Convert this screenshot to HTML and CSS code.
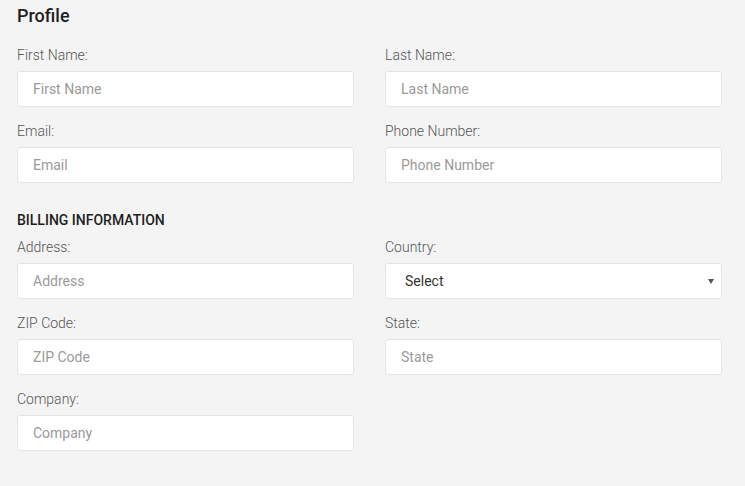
FILE: index.html
```html
<!DOCTYPE html>
<html>
<head>
<meta charset="utf-8">
<link rel="stylesheet" href="styles.css">
</head>
<body>
<div class="page">
  <h1 class="title">Profile</h1>
  <div class="grid">
    <div class="field">
      <label class="label">First Name:</label>
      <input class="input" type="text" placeholder="First Name">
    </div>
    <div class="field">
      <label class="label">Last Name:</label>
      <input class="input" type="text" placeholder="Last Name">
    </div>
    <div class="field">
      <label class="label">Email:</label>
      <input class="input" type="text" placeholder="Email">
    </div>
    <div class="field">
      <label class="label">Phone Number:</label>
      <input class="input" type="text" placeholder="Phone Number">
    </div>
  </div>
  <h2 class="section">BILLING INFORMATION</h2>
  <div class="grid">
    <div class="field">
      <label class="label">Address:</label>
      <input class="input" type="text" placeholder="Address">
    </div>
    <div class="field">
      <label class="label">Country:</label>
      <div class="select-wrap">
        <select class="select">
          <option>Select</option>
        </select>
      </div>
    </div>
    <div class="field">
      <label class="label">ZIP Code:</label>
      <input class="input" type="text" placeholder="ZIP Code">
    </div>
    <div class="field">
      <label class="label">State:</label>
      <input class="input" type="text" placeholder="State">
    </div>
    <div class="field">
      <label class="label">Company:</label>
      <input class="input" type="text" placeholder="Company">
    </div>
  </div>
</div>
</body>
</html>
```

FILE: styles.css
```css
* { box-sizing: border-box; }
html, body {
  margin: 0;
  background: #f4f4f4;
  font-family: Roboto, "Liberation Sans", Arial, sans-serif;
}
.page {
  padding: 5px 0 0 17px;
  width: 722px;
}
.title {
  margin: 0 0 19px;
  font-size: 18px;
  line-height: 22px;
  font-weight: 500;
  color: #1e1e1e;
}
.grid {
  display: grid;
  grid-template-columns: 337px 337px;
  column-gap: 31px;
}
.field {
  display: flex;
  flex-direction: column;
  margin-bottom: 15px;
}
.label {
  font-size: 14px;
  line-height: 18px;
  font-weight: 300;
  color: #555;
  margin-bottom: 7px;
}
.input, .select {
  height: 36px;
  width: 100%;
  background: #fff;
  border: 1px solid #e3e6e8;
  border-radius: 3px;
  font-family: inherit;
  font-size: 14px;
  color: #333;
  padding: 0 15px;
  outline: none;
}
.input::placeholder {
  color: #9a9a9a;
}
.select-wrap {
  position: relative;
}
.select {
  appearance: none;
  -webkit-appearance: none;
  padding: 0 19px;
  color: #333;
}
.select-wrap::after {
  content: "";
  position: absolute;
  right: 8px;
  top: 16px;
  border-left: 3px solid transparent;
  border-right: 3px solid transparent;
  border-top: 5px solid #555;
}
.section {
  margin: 13px 0 9px;
  font-size: 14px;
  line-height: 18px;
  font-weight: 500;
  color: #1e1e1e;
}
```
